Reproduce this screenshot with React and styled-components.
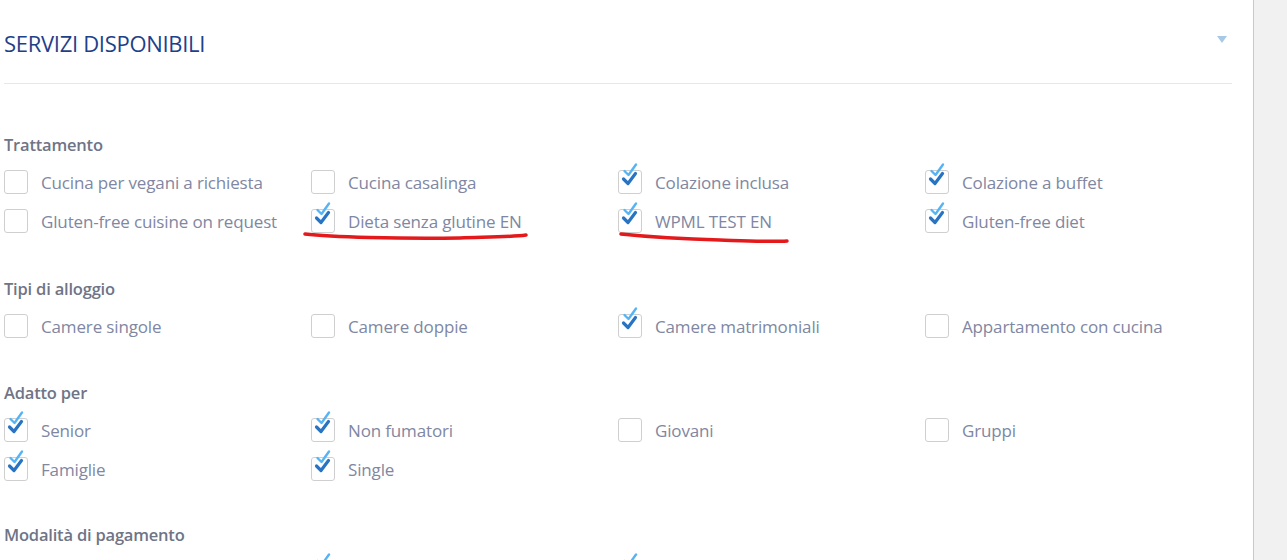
import React from "react";
import styled, { createGlobalStyle } from "styled-components";

const Global = createGlobalStyle`
  html, body { margin: 0; padding: 0; background: #fff; }
  body { font-family: "Open Sans", "Noto Sans", sans-serif; overflow: hidden; }
`;

const Page = styled.div`
  display: flex;
  width: 1287px;
  height: 560px;
  overflow: hidden;
`;

const Main = styled.main`
  flex: 1;
  padding: 0 21px 0 4px;
  position: relative;
`;

const Sidebar = styled.aside`
  width: 33px;
  border-left: 1px solid #c9c9c9;
  background: #f1f1f1;
`;

const Header = styled.header`
  display: flex;
  align-items: center;
  justify-content: space-between;
  height: 84px;
  border-bottom: 1px solid #e8e8e8;
  box-sizing: border-box;
`;

const Title = styled.h2`
  margin: 0;
  padding-top: 2px;
  font-size: 22px;
  font-weight: 500;
  color: #1d4189;
  letter-spacing: -0.3px;
`;

const Caret = styled.span`
  width: 0;
  height: 0;
  margin-right: 5px;
  margin-top: -5px;
  border-left: 5.5px solid transparent;
  border-right: 5.5px solid transparent;
  border-top: 7px solid #a8c9e5;
`;

const Section = styled.section`
  margin-top: ${(p) => p.$top}px;
`;

const Label = styled.h3`
  margin: 0;
  height: 24px;
  line-height: 24px;
  font-size: 16.5px;
  font-weight: 600;
  color: #6f7486;
  letter-spacing: -0.2px;
`;

const Grid = styled.div`
  display: grid;
  grid-template-columns: repeat(4, 1fr);
  grid-auto-rows: 39px;
  margin-top: 12px;
`;

const Item = styled.label`
  display: flex;
  align-items: center;
  gap: 13px;
  height: 26px;
  font-size: 17px;
  color: #8087a2;
  letter-spacing: -0.15px;
  white-space: nowrap;
`;

const Box = styled.span`
  position: relative;
  flex: 0 0 auto;
  width: 22px;
  height: 22px;
  border: 1px solid #cfcfcf;
  border-radius: 3px;
  background: #fff;
`;

const CheckSvg = styled.svg`
  position: absolute;
  left: 2px;
  top: -9px;
  overflow: visible;
`;

const Check = () => (
  <CheckSvg width="20" height="26" viewBox="0 0 20 26">
    <path d="M3.5 9 L7.5 13 L15 2.5" fill="none" stroke="#56b4f4" strokeWidth="2.4" strokeLinecap="round" strokeLinejoin="round" />
    <path d="M2.5 17 L7 21.5 L14.5 11.5" fill="none" stroke="#2874c2" strokeWidth="3.2" strokeLinecap="round" strokeLinejoin="round" />
  </CheckSvg>
);

const Marks = styled.svg`
  position: absolute;
  left: 0;
  top: 0;
  pointer-events: none;
`;

const sections = [
  {
    title: "Trattamento",
    top: 49,
    items: [
      ["Cucina per vegani a richiesta", false],
      ["Cucina casalinga", false],
      ["Colazione inclusa", true],
      ["Colazione a buffet", true],
      ["Gluten-free cuisine on request", false],
      ["Dieta senza glutine EN", true],
      ["WPML TEST EN", true],
      ["Gluten-free diet", true],
    ],
  },
  {
    title: "Tipi di alloggio",
    top: 30,
    items: [
      ["Camere singole", false],
      ["Camere doppie", false],
      ["Camere matrimoniali", true],
      ["Appartamento con cucina", false],
    ],
  },
  {
    title: "Adatto per",
    top: 29,
    items: [
      ["Senior", true],
      ["Non fumatori", true],
      ["Giovani", false],
      ["Gruppi", false],
      ["Famiglie", true],
      ["Single", true],
    ],
  },
  {
    title: "Modalità di pagamento",
    top: 28,
    items: [
      ["Contanti", false],
      ["Carta di credito", true],
      ["Bonifico bancario", true],
      ["Assegno", false],
    ],
  },
];

export default function App() {
  return (
    <Page>
      <Global />
      <Main>
        <Header>
          <Title>SERVIZI DISPONIBILI</Title>
          <Caret />
        </Header>
        {sections.map((s) => (
          <Section key={s.title} $top={s.top}>
            <Label>{s.title}</Label>
            <Grid>
              {s.items.map(([text, checked]) => (
                <div key={text}>
                  <Item>
                    <Box>{checked && <Check />}</Box>
                    {text}
                  </Item>
                </div>
              ))}
            </Grid>
          </Section>
        ))}
        <Marks width="1253" height="560" viewBox="0 0 1253 560">
          <path d="M305 234 C 330 237, 400 239, 460 238 C 490 237, 512 237, 526 235" fill="none" stroke="#e3191c" strokeWidth="3.5" strokeLinecap="round" />
          <path d="M621 234 C 640 236, 680 239, 720 240 C 750 241, 772 242, 787 241" fill="none" stroke="#e3191c" strokeWidth="3.5" strokeLinecap="round" />
        </Marks>
      </Main>
      <Sidebar />
    </Page>
  );
}
